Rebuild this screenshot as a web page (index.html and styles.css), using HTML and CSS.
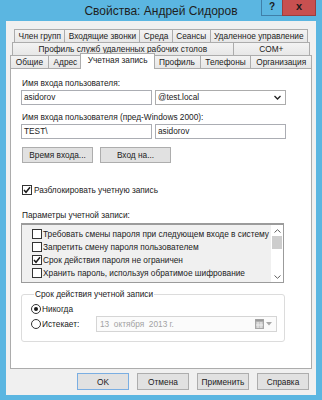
FILE: index.html
```html
<!DOCTYPE html>
<html lang="ru">
<head>
    <meta charset="UTF-8">
    <meta name="viewport" content="width=device-width, initial-scale=1.0">
    <title>Свойства: Андрей Сидоров</title>
    <link rel="stylesheet" href="styles.css">
</head>
<body>
    <div class="window">
        <div class="titlebar">
            <div></div>
            <div class="title">Свойства: Андрей Сидоров</div>
            <div class="caption-buttons">
                <div class="cap-btn help">?</div>
                <div class="cap-btn close">x</div>
            </div>
        </div>

        <div class="client">
            <div class="tabs">
                <div class="tab-row row1">
                    <div class="tab">Член групп</div>
                    <div class="tab">Входящие звонки</div>
                    <div class="tab">Среда</div>
                    <div class="tab">Сеансы</div>
                    <div class="tab">Удаленное управление</div>
                </div>
                <div class="tab-row row2">
                    <div class="tab">Профиль служб удаленных рабочих столов</div>
                    <div class="tab">COM+</div>
                </div>
                <div class="tab-row row3">
                    <div class="tab">Общие</div>
                    <div class="tab">Адрес</div>
                    <div class="tab selected">Учетная запись</div>
                    <div class="tab">Профиль</div>
                    <div class="tab">Телефоны</div>
                    <div class="tab">Организация</div>
                </div>
            </div>

            <div class="panel">
                <div class="label">Имя входа пользователя:</div>
                <div class="field-row">
                    <div class="textbox">asidorov</div>
                    <div class="textbox combo">
                        <span>@test.local</span>
                        <svg class="chevron" width="7" height="5" viewBox="0 0 7 5"><polyline points="0.5,1 3.5,4 6.5,1" fill="none" stroke="#222" stroke-width="1.3"/></svg>
                    </div>
                </div>

                <div class="label second">Имя входа пользователя (пред-Windows 2000):</div>
                <div class="field-row">
                    <div class="textbox">TEST\</div>
                    <div class="textbox">asidorov</div>
                </div>

                <div class="button-row">
                    <button class="btn">Время входа...</button>
                    <button class="btn">Вход на...</button>
                </div>

                <div class="check-row unlock">
                    <span class="checkbox checked">
                        <svg width="8" height="8" viewBox="0 0 8 8"><polyline points="1,4 3,6.3 7,1.2" fill="none" stroke="#1a1a1a" stroke-width="1.5"/></svg>
                    </span>
                    <span>Разблокировать учетную запись</span>
                </div>

                <div class="label options">Параметры учетной записи:</div>
                <div class="listbox">
                    <div class="list-items">
                        <div class="check-row item">
                            <span class="checkbox"></span>
                            <span>Требовать смены пароля при следующем входе в систему</span>
                        </div>
                        <div class="check-row item">
                            <span class="checkbox"></span>
                            <span>Запретить смену пароля пользователем</span>
                        </div>
                        <div class="check-row item">
                            <span class="checkbox checked">
                                <svg width="8" height="8" viewBox="0 0 8 8"><polyline points="1,4 3,6.3 7,1.2" fill="none" stroke="#1a1a1a" stroke-width="1.5"/></svg>
                            </span>
                            <span>Срок действия пароля не ограничен</span>
                        </div>
                        <div class="check-row item">
                            <span class="checkbox"></span>
                            <span>Хранить пароль, используя обратимое шифрование</span>
                        </div>
                    </div>
                    <div class="scrollbar">
                        <div class="arrow">
                            <svg width="7" height="4" viewBox="0 0 7 4"><polyline points="0.5,3.5 3.5,0.7 6.5,3.5" fill="none" stroke="#606060" stroke-width="1"/></svg>
                        </div>
                        <div class="thumb"></div>
                        <div class="track"></div>
                        <div class="arrow">
                            <svg width="7" height="4" viewBox="0 0 7 4"><polyline points="0.5,0.5 3.5,3.3 6.5,0.5" fill="none" stroke="#606060" stroke-width="1"/></svg>
                        </div>
                    </div>
                </div>

                <fieldset class="group">
                    <legend>Срок действия учетной записи</legend>
                    <div class="radio-row">
                        <span class="radio checked"></span>
                        <span>Никогда</span>
                    </div>
                    <div class="radio-row expires">
                        <div class="radio-label">
                            <span class="radio"></span>
                            <span>Истекает:</span>
                        </div>
                        <div class="datepicker">
                            <span class="date">13  октября  2013 г.</span>
                            <svg class="cal" width="9" height="10" viewBox="0 0 9 10">
                                <rect x="0.5" y="0.5" width="8" height="9" fill="#c8c8c8" stroke="#a8a8a8"/>
                                <rect x="0.5" y="0.5" width="8" height="2" fill="#9a9a9a"/>
                                <line x1="3" y1="3" x2="3" y2="9" stroke="#eee"/>
                                <line x1="6" y1="3" x2="6" y2="9" stroke="#eee"/>
                                <line x1="1" y1="6" x2="8" y2="6" stroke="#eee"/>
                            </svg>
                            <svg class="drop" width="6" height="4" viewBox="0 0 6 4"><polygon points="0,0 6,0 3,3.5" fill="#a8a8a8"/></svg>
                        </div>
                    </div>
                </fieldset>
            </div>

            <div class="dialog-buttons">
                <button class="btn dlg default">OK</button>
                <button class="btn dlg">Отмена</button>
                <button class="btn dlg">Применить</button>
                <button class="btn dlg">Справка</button>
            </div>
        </div>
    </div>
</body>
</html>
```

FILE: styles.css
```css
* {
    box-sizing: border-box;
}
body {
    margin: 0;
    font-family: "Liberation Sans", Arial, sans-serif;
    font-size: 8.3px;
    color: #222;
}
.window {
    width: 322px;
    height: 400px;
    background-color: #5bb6e1;
    padding: 0 6px 5px 6px;
    display: flex;
    flex-direction: column;
}
.titlebar {
    height: 21px;
    margin: 0 -6px;
    display: grid;
    grid-template-columns: 1fr auto 1fr;
}
.title {
    font-size: 12px;
    line-height: 22px;
    color: #1e1e1e;
    white-space: nowrap;
}
.caption-buttons {
    display: flex;
    justify-content: flex-end;
    align-items: flex-start;
    padding-right: 6px;
}
.cap-btn {
    height: 16px;
    border: 1px solid #3f7fa8;
    border-top: none;
    text-align: center;
    font-weight: bold;
    line-height: 14px;
    color: #1a1a1a;
}
.help {
    width: 21px;
    font-size: 10px;
    border-right: none;
}
.close {
    width: 34px;
    background-color: #c75050;
    border-color: #9c3d3d;
    font-size: 11px;
    line-height: 13px;
}
.client {
    flex: 1;
    background-color: #f0f0f0;
    padding: 8px 4px 0 4px;
    display: flex;
    flex-direction: column;
}

/* tabs */
.tab-row {
    display: flex;
    align-items: flex-start;
}
.row1 {
    margin: 0 4px;
}
.row2 {
    margin: -1px 2px 0 2px;
}
.row3 {
    margin-top: -1px;
}
.tab {
    flex: 1 1 auto;
    min-width: 0;
    height: 14px;
    padding: 0 3px;
    border: 1px solid #acacac;
    background: linear-gradient(#f3f3f3, #e7e7e7);
    line-height: 12px;
    text-align: center;
    white-space: nowrap;
    overflow: hidden;
}
.tab + .tab {
    margin-left: -1px;
}
.tab.selected {
    position: relative;
    z-index: 1;
    height: 16px;
    margin: -2px -2px -1px -3px;
    padding: 0 5px;
    background: #fff;
    border-bottom: none;
    line-height: 13px;
}
.tab.selected + .tab {
    margin-left: 0;
}

/* page */
.panel {
    height: 301px;
    margin-top: -1px;
    background: #fff;
    border: 1px solid #acacac;
    padding: 9px 0 0 10px;
}
.label {
    line-height: 11px;
    padding-left: 1px;
    margin-bottom: 1px;
}
.label.second {
    margin-top: 7px;
}
.field-row {
    display: flex;
    gap: 3px;
}
.textbox {
    width: 131px;
    height: 15px;
    border: 1px solid #abadb3;
    background: #fff;
    padding-left: 2px;
    line-height: 13px;
}
.combo {
    display: flex;
    align-items: center;
    justify-content: space-between;
    padding-right: 4px;
    border-color: #acacac;
}
.button-row {
    display: flex;
    gap: 7px;
    margin: 8px 0 0 1px;
}
.btn {
    width: 71px;
    height: 16px;
    border: 1px solid #adadad;
    background: #e1e1e1;
    font-family: inherit;
    font-size: 8.3px;
    color: #222;
    padding: 0;
}
.check-row {
    display: flex;
    align-items: center;
    gap: 2px;
    height: 11px;
    white-space: nowrap;
}
.unlock {
    margin: 21px 0 0 1px;
}
.checkbox {
    flex: none;
    width: 10px;
    height: 10px;
    border: 1px solid #333;
    background: #fff;
    display: flex;
    align-items: center;
    justify-content: center;
}
.label.options {
    margin-top: 15px;
    margin-bottom: 2px;
}
.listbox {
    width: 263px;
    height: 60px;
    border: 1px solid #9b9b9b;
    border-top-width: 2px;
    background: #f0f0f0;
    display: flex;
}
.list-items {
    flex: 1;
    min-width: 0;
    padding: 2px 0 0 10px;
}
.check-row.item {
    height: 13px;
    gap: 1px;
}
.scrollbar {
    flex: none;
    width: 12px;
    background: #fff;
    display: flex;
    flex-direction: column;
}
.arrow {
    height: 11px;
    display: flex;
    align-items: center;
    justify-content: center;
}
.thumb {
    height: 13px;
    margin: 0 1px;
    background: #cdcdcd;
}
.track {
    flex: 1;
}

/* account expiry */
.group {
    width: 264px;
    margin: 6px 0 0 0;
    padding: 4px 0 9px 9px;
    border: 1px solid #dcdcdc;
    border-radius: 3px;
}
.group legend {
    margin-left: 3px;
    padding: 0 1px;
    line-height: 10px;
}
.radio-row {
    display: flex;
    align-items: center;
    gap: 1px;
    height: 11px;
}
.radio-row.expires {
    height: 16px;
    margin-top: 2px;
}
.radio-label {
    width: 64px;
    display: flex;
    align-items: center;
    gap: 1px;
}
.radio {
    width: 10px;
    height: 10px;
    border: 1px solid #333;
    border-radius: 50%;
    background: #fff;
    display: flex;
    align-items: center;
    justify-content: center;
}
.radio.checked::after {
    content: "";
    width: 4px;
    height: 4px;
    border-radius: 50%;
    background: #1a1a1a;
}
.datepicker {
    width: 181px;
    height: 16px;
    border: 1px solid #d5d5d5;
    background: #fbfbfb;
    display: flex;
    align-items: center;
    padding: 0 4px 0 3px;
    gap: 2px;
}
.date {
    flex: 1;
    white-space: pre;
    color: #a2a2a2;
}

/* bottom */
.dialog-buttons {
    display: flex;
    justify-content: flex-end;
    gap: 8px;
    margin: 4px 3px 0 0;
}
.btn.dlg {
    width: 52px;
    height: 17px;
}
.btn.default {
    border-color: #7aaee2;
}
```
